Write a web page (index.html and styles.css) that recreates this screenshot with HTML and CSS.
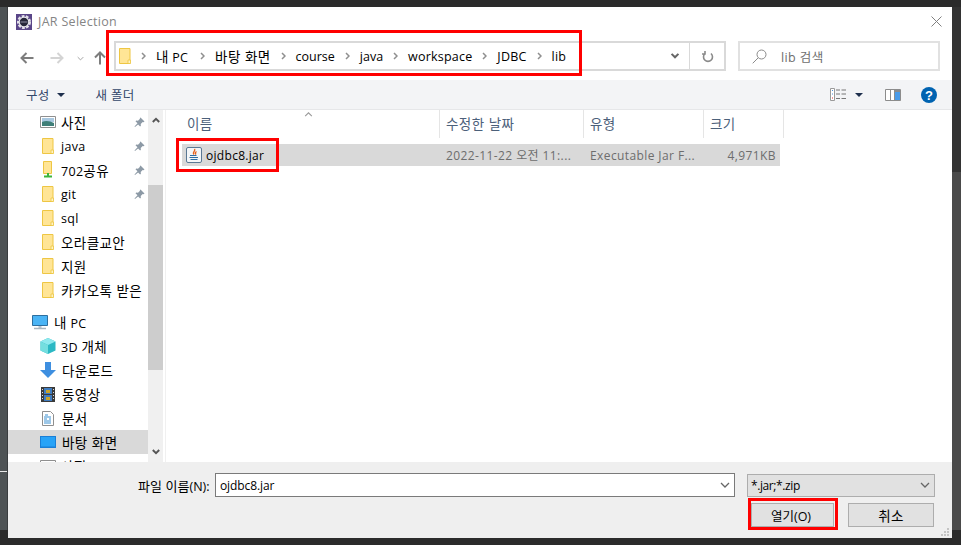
FILE: index.html
```html
<!DOCTYPE html>
<html lang="ko">
<head>
<meta charset="utf-8">
<title>JAR Selection</title>
<link rel="stylesheet" href="styles.css">
</head>
<body>
<svg class="defs" width="0" height="0" aria-hidden="true">
  <symbol id="folder" viewBox="0 0 12 16">
    <path d="M.5.5h10.500v15H.5z" fill="#ffe596" stroke="#eec643"/>
    <path d="M9 12h2.500v3.500H9z" fill="#fff3c4" stroke="#eec643" stroke-width=".8"/>
  </symbol>
  <symbol id="pin" viewBox="0 0 11 11">
    <path d="M6.500.5l4 4-1 .8-.8-.2-2 2 .2 1.700-.8.8-2-2L1 10l-.5-.5 3-3.200-2-2 .8-.8 1.700.2 2-2-.2-.800z" fill="#8d9aa6"/>
  </symbol>
  <symbol id="chev" viewBox="0 0 10 6">
    <path d="M1 1l4 4 4-4" fill="none" stroke="currentColor" stroke-width="1.300"/>
  </symbol>
  <symbol id="chev-bold" viewBox="0 0 10 7">
    <path d="M1 1l4 4 4-4" fill="none" stroke="currentColor" stroke-width="2.400"/>
  </symbol>
  <symbol id="crumb" viewBox="0 0 5 8">
    <path d="M1 1l3 3-3 3" fill="none" stroke="#8f8f8f" stroke-width="1.500"/>
  </symbol>
</svg>

<div class="screen">
  <div class="top-strip"></div>
  <div class="middle">
    <div class="left-strip"></div>
    <main class="dialog">
      <header class="titlebar">
        <svg class="app-icon" width="16" height="16" viewBox="0 0 16 16">
          <rect width="16" height="16" fill="#5a4688"/>
          <circle cx="8" cy="8" r="6" fill="none" stroke="#e4e2ea" stroke-width="2" stroke-dasharray="2.800 1.400"/>
          <circle cx="8" cy="8" r="4.800" fill="#26263a" stroke="#e8e8ee" stroke-width="1.200"/>
          <path d="M4.500 8h7" stroke="#8f8fa4"/>
        </svg>
        <span class="title-text">JAR Selection</span>
        <svg class="close" width="11" height="11" viewBox="0 0 11 11"><path d="M.5.5l10 10M10.500.5l-10 10" stroke="#808080" fill="none"/></svg>
      </header>

      <nav class="navrow">
        <svg class="nav-ico back" width="14" height="12" viewBox="0 0 14 12"><path d="M6.500 1L1.500 6l5 5M2 6h11.500" fill="none" stroke="#7d7d7d" stroke-width="2"/></svg>
        <svg class="nav-ico fwd" width="14" height="12" viewBox="0 0 14 12"><path d="M7.500 1l5 5-5 5M12 6H.5" fill="none" stroke="#d4d4d4" stroke-width="2"/></svg>
        <svg class="nav-ico down" width="7" height="5"><use href="#chev" color="#9a9a9a"/></svg>
        <svg class="nav-ico up" width="12" height="14" viewBox="0 0 12 14"><path d="M1 6.500l5-5 5 5M6 2v11.500" fill="none" stroke="#7d7d7d" stroke-width="2"/></svg>
        <div class="address">
          <svg class="crumb-folder" width="12" height="16"><use href="#folder"/></svg>
          <svg class="sep" width="5" height="8"><use href="#crumb"/></svg><span class="crumb c1"><span class="ko">내</span> PC</span>
          <svg class="sep" width="5" height="8"><use href="#crumb"/></svg><span class="crumb ko">바탕 화면</span>
          <svg class="sep" width="5" height="8"><use href="#crumb"/></svg><span class="crumb tight">course</span>
          <svg class="sep" width="5" height="8"><use href="#crumb"/></svg><span class="crumb tight">java</span>
          <svg class="sep" width="5" height="8"><use href="#crumb"/></svg><span class="crumb">workspace</span>
          <svg class="sep" width="5" height="8"><use href="#crumb"/></svg><span class="crumb">JDBC</span>
          <svg class="sep" width="5" height="8"><use href="#crumb"/></svg><span class="crumb">lib</span>
          <svg class="addr-chev" width="10" height="6"><use href="#chev-bold" color="#666"/></svg>
          <div class="refresh">
            <svg width="12" height="13" viewBox="0 0 12 13"><path d="M3 3.500a4.500 4.500 0 1 0 6 0M3 1v3H0" fill="none" stroke="#8a8a8a" stroke-width="1.600"/></svg>
          </div>
        </div>
        <div class="search">
          <svg width="15" height="15" viewBox="0 0 15 15"><circle cx="9.500" cy="5.500" r="4.500" fill="none" stroke="#8a8a8a"/><path d="M6.200 8.800L.7 14.300" stroke="#8a8a8a"/></svg>
          <span>lib 검색</span>
        </div>
      </nav>

      <div class="toolbar">
        <span class="tool organize">구성</span>
        <i class="caret"></i>
        <span class="tool newfolder">새 폴더</span>
        <div class="tool-right">
          <svg class="view" width="16" height="13" viewBox="0 0 16 13">
            <path d="M.5.500h4v12h-4z" fill="#fff" stroke="#9a9a9a"/>
            <path d="M2 2h1v1H2zM2 5.500h1v1H2z" fill="#4a90d9"/><path d="M2 9.500h1v1H2z" fill="#d33"/>
            <path d="M6 2h4M11.500 2H16M6 6h4M11.500 6H16M6 10.500h4M11.500 10.500H16" stroke="#777"/>
          </svg>
          <i class="caret view-caret"></i>
          <svg class="pane" width="16" height="12" viewBox="0 0 16 12">
            <path d="M.5.500h15v11H.5z" fill="#fff" stroke="#8c8c8c"/>
            <path d="M5.500 1v10" stroke="#8c8c8c"/>
            <path d="M9 1h6.500v10.500H9z" fill="#8c8c8c"/><path d="M10 3h5v8h-5z" fill="#4a9be8"/>
          </svg>
          <svg class="help" width="16" height="16" viewBox="0 0 16 16">
            <circle cx="8" cy="8" r="8" fill="#0063b1"/>
            <text x="8" y="12.500" text-anchor="middle" class="help-q">?</text>
          </svg>
        </div>
      </div>

      <div class="content">
        <aside class="sidebar">
          <div class="tree">
            <div class="row"><svg class="ico-wide" width="16" height="12" viewBox="0 0 16 12"><path d="M.5.5h15v11H.5z" fill="#fff" stroke="#8f8f8f"/><path d="M2 2h12v4H2z" fill="#a9c8e0"/><path d="M2 6c4-2 8-1 12 1v3H2z" fill="#3f7f78"/></svg><span class="ko">사진</span><svg class="pin" width="11" height="11"><use href="#pin"/></svg></div>
            <div class="row"><svg class="ico" width="12" height="16"><use href="#folder"/></svg><span>java</span><svg class="pin" width="11" height="11"><use href="#pin"/></svg></div>
            <div class="row"><svg class="ico" width="12" height="18" viewBox="0 0 12 18"><path d="M1.500.5h8v12h-8z" fill="#ffe596" stroke="#eec643"/><path d="M6 12v3M2 15.500h8" stroke="#3db53d" stroke-width="2"/></svg><span>702<span class="ko">공유</span></span><svg class="pin" width="11" height="11"><use href="#pin"/></svg></div>
            <div class="row"><svg class="ico" width="12" height="16"><use href="#folder"/></svg><span>git</span><svg class="pin" width="11" height="11"><use href="#pin"/></svg></div>
            <div class="row"><svg class="ico" width="12" height="16"><use href="#folder"/></svg><span>sql</span></div>
            <div class="row"><svg class="ico" width="12" height="16"><use href="#folder"/></svg><span class="ko">오라클교안</span></div>
            <div class="row"><svg class="ico" width="12" height="16"><use href="#folder"/></svg><span class="ko">지원</span></div>
            <div class="row"><svg class="ico" width="12" height="16"><use href="#folder"/></svg><span class="ko">카카오톡 받은</span></div>
            <div class="row pc"><svg class="ico-pc" width="16" height="15" viewBox="0 0 16 15"><path d="M.5.5h15v10H.5z" fill="#4ab4f5" stroke="#2d6f9f"/><path d="M6.500 11h3v2h-3z" fill="#b9c6d0"/><path d="M2 13.500h12" stroke="#a9b6c0" stroke-width="1.500"/></svg><span class="pc-label"><span class="ko">내</span> PC</span></div>
            <div class="row"><svg class="ico-wide" width="16" height="16" viewBox="0 0 16 16"><path d="M8 0l7.500 3.500v9L8 16 .5 12.500v-9z" fill="#2bb8c4"/><path d="M8 0l7.500 3.500L8 7 .5 3.500z" fill="#8fe9ee"/><path d="M8 7v9L.5 12.500v-9z" fill="#74dedf"/></svg><span>3D <span class="ko">개체</span></span></div>
            <div class="row"><svg class="ico-wide" width="16" height="16" viewBox="0 0 16 16"><path d="M5 0h6v8h5l-8 8-8-8h5z" fill="#3e8fe0"/></svg><span class="ko wide">다운로드</span></div>
            <div class="row"><svg class="ico-film" width="14" height="15" viewBox="0 0 14 15"><path d="M0 0h14v15H0z" fill="#3a3a3a"/><path d="M3 1h8v6H3z" fill="#3f7cc0"/><path d="M3 8h8v6H3z" fill="#3f7cc0"/><path d="M5 3h4v3H5zM5 10h4v3H5z" fill="#c9a227"/><path d="M1 2h1v1H1zM1 5h1v1H1zM1 8h1v1H1zM1 11h1v1H1zM12 2h1v1h-1zM12 5h1v1h-1zM12 8h1v1h-1zM12 11h1v1h-1z" fill="#ddd"/></svg><span class="ko wide">동영상</span></div>
            <div class="row"><svg class="ico-doc" width="12" height="15" viewBox="0 0 12 15"><path d="M.5.5h8l3 3v11H.5z" fill="#fff" stroke="#8f8f8f"/><path d="M3 4h3M2 6h7M2 8h3M7 8h2M2 10h7M2 12h7" stroke="#3a8fd0"/></svg><span class="ko wide">문서</span></div>
            <div class="row selected"><svg class="ico-wide" width="16" height="12" viewBox="0 0 16 12"><path d="M0 0h16v12H0z" fill="#1b7fd6"/><path d="M1 1h14v9.500H1z" fill="#28a3f7"/></svg><span class="ko wide">바탕 화면</span></div>
            <div class="row"><svg class="ico-wide" width="16" height="12" viewBox="0 0 16 12"><path d="M.5.5h15v11H.5z" fill="#fff" stroke="#8f8f8f"/></svg><span class="ko">사진</span></div>
          </div>
          <div class="scrollbar">
            <svg class="sb-up" width="8" height="6"><use href="#chev-bold" color="#555"/></svg>
            <div class="thumb"></div>
            <svg class="sb-down" width="8" height="6"><use href="#chev-bold" color="#555"/></svg>
          </div>
        </aside>
        <section class="files">
          <div class="cols">
            <div class="col c-name"><span class="ko">이름</span><svg class="sort" width="9" height="5"><use href="#chev" color="#999"/></svg></div>
            <div class="col c-date"><span class="ko">수정한 날짜</span></div>
            <div class="col c-type"><span class="ko">유형</span></div>
            <div class="col c-size"><span class="ko">크기</span></div>
          </div>
          <div class="file">
            <div class="cell c-name">
              <svg class="jar" width="16" height="16" viewBox="0 0 16 16">
                <rect x=".5" y=".5" width="15" height="15" rx="1.500" fill="#f4f6f8" stroke="#5a7894"/>
                <path d="M8.500 2C10 4 6 5 7.800 7.500M10.500 4.500C9 5.500 9.200 6.500 10 7.500" fill="none" stroke="#e8611a" stroke-width="1.400"/>
                <path d="M4 8.500h6.500M3.500 10.500h8.500M4.500 12.500h7" stroke="#2f6da3"/>
              </svg>
              <span>ojdbc8.jar</span>
            </div>
            <div class="cell c-date">2022-11-22 오전 11:...</div>
            <div class="cell c-type">Executable Jar F...</div>
            <div class="cell c-size">4,971KB</div>
          </div>
        </section>
      </div>

      <footer class="bottom">
        <div class="name-line">
          <span class="label"><span class="ko">파일 이름</span>(N):</span>
          <div class="name-input"><span>ojdbc8.jar</span><svg width="10" height="6"><use href="#chev" color="#666"/></svg></div>
          <div class="filter"><span>*.jar;*.zip</span><svg width="10" height="6"><use href="#chev" color="#666"/></svg></div>
        </div>
        <div class="buttons">
          <button class="btn open"><span class="ko">열기</span>(O)</button>
          <button class="btn cancel"><span class="ko">취소</span></button>
        </div>
        <svg class="grip" width="9" height="9" viewBox="0 0 9 9"><path d="M6 0h2v2H6zM3 3h2v2H3zM6 3h2v2H6zM0 6h2v2H0zM3 6h2v2H3zM6 6h2v2H6z" fill="#c4c4c4"/></svg>
      </footer>

      <div class="mark mark-path"></div>
      <div class="mark mark-file"></div>
      <div class="mark mark-open"></div>
    </main>
    <div class="right-strip"></div>
  </div>
  <div class="bottom-strip"></div>
</div>
</body>
</html>
```
FILE: styles.css
```css
* { box-sizing: border-box; }
html, body { margin: 0; padding: 0; }
body {
  width: 961px;
  height: 545px;
  overflow: hidden;
  font-family: "Open Sans", "Noto Sans CJK KR", sans-serif;
  font-size: 12px;
  color: #000;
  background: #2b2b2b;
}
.defs { position: absolute; }
.ko { font-family: "Noto Sans CJK KR", sans-serif; font-size: 13.500px; letter-spacing: .4px; }
.screen { display: flex; flex-direction: column; height: 545px; }
.top-strip { height: 7px; background: #2b2b2b; flex: none; }
.middle { display: flex; height: 531px; flex: none; }
.left-strip { width: 8px; height: 523px; flex: none; background: linear-gradient(#4e5355 464px, #e8e8e8 464px, #e8e8e8 465px, #4e5355 465px); border-right: 1px solid #3a3d3f; }
.right-strip { flex: 1; background: linear-gradient(#333 165px, #4a4a4a 165px, #4a4a4a 523px, #2b2b2b 523px); }
.bottom-strip { flex: 1; background: #2b2b2b; }
.dialog { position: relative; width: 944px; display: flex; flex-direction: column; background: #fff; }

.titlebar { height: 23px; display: flex; align-items: center; padding: 6px 10px 0 8px; flex: none; }
.title-text { margin-left: 6px; color: #858585; font-size: 12.500px; letter-spacing: .3px; }
.close { margin-left: auto; }

.navrow { height: 50px; display: flex; align-items: center; padding: 2px 12px 0 12px; flex: none; }
.nav-ico { flex: none; margin-top: 4px; }
.fwd { margin-left: 16px; }
.down { margin-left: 13px; }
.up { margin-left: 10px; }
.address { margin-left: 8px; width: 612px; height: 30px; border: 2px solid #d9d9d9; display: flex; align-items: center; padding-left: 3px; flex: none; }
.crumb-folder { flex: none; }
.sep { flex: none; margin-left: 10px; margin-right: 10px; }
.crumb { font-size: 12.500px; white-space: nowrap; letter-spacing: .2px; }
.crumb.ko { font-size: 13.500px; letter-spacing: .4px; }
.crumb.tight { letter-spacing: 0; }
.c1 { margin-right: 2px; }
.addr-chev { margin-left: auto; margin-right: 9px; flex: none; }
.refresh { width: 35px; height: 100%; border-left: 1px solid #d9d9d9; display: flex; align-items: center; justify-content: center; padding-left: 2px; flex: none; }
.search { margin-left: 12px; width: 202px; height: 30px; border: 2px solid #e1e1e1; display: flex; align-items: center; padding-left: 12px; gap: 14px; color: #6d6d6d; font-size: 12.500px; letter-spacing: .4px; flex: none; }

.toolbar { height: 30px; background: #f3f4f6; border-bottom: 1px solid #e6e7e9; display: flex; align-items: center; padding-left: 18px; flex: none; color: #33476a; }
.tool { font-size: 12.500px; letter-spacing: .3px; }
.caret { display: block; width: 0; height: 0; border: 4px solid transparent; border-top: 4px solid #1e2f4d; border-bottom: 0; margin-left: 7px; flex: none; }
.newfolder { margin-left: 31px; }
.tool-right { margin-left: auto; display: flex; align-items: center; padding-right: 15px; }
.view-caret { margin-left: 9px; }
.pane { margin-left: 22px; }
.help { margin-left: 20px; }
.help-q { font-family: "Liberation Sans", sans-serif; font-size: 13px; font-weight: 700; fill: #fff; }

.content { flex: 1; min-height: 0; display: flex; }
.sidebar { width: 155px; display: flex; flex: none; height: 100%; }
.tree { width: 140px; overflow: hidden; flex: none; }
.row { height: 24px; display: flex; align-items: center; padding-left: 34px; position: relative; font-size: 12.500px; letter-spacing: .3px; white-space: nowrap; }
.row > span { margin-left: 7px; }
.row > .wide { margin-left: 8px; }
.row > .pc-label { margin-left: 6px; }
.ico { flex: none; }
.ico-pc { margin-left: -10px; margin-right: 0; flex: none; }
.ico-wide { margin-left: -2px; margin-right: -2px; flex: none; }
.ico-film { margin-left: -1px; margin-right: -1px; flex: none; }
.ico-doc { flex: none; }
.pc { margin-top: 8px; }
.selected { background: #d9d9d9; }
.pin { position: absolute; right: 3px; top: 7px; }
.scrollbar { width: 15px; flex: none; background: #f0f0f0; position: relative; display: flex; flex-direction: column; align-items: center; padding-top: 7px; }
.sb-up { transform: rotate(180deg); flex: none; }
.thumb { width: 15px; height: 185px; background: #cdcdcd; margin-top: 62px; flex: none; }
.sb-down { margin-top: 79px; flex: none; }

.files { flex: 1; border-left: 1px solid #f0f0f0; margin-left: 2px; }
.cols { display: flex; height: 28px; padding-left: 16px; color: #4c607a; font-size: 12px; letter-spacing: .4px; }
.col { height: 28px; display: flex; align-items: center; padding: 0 0 2px 6px; border-right: 1px solid #e5e5e5; position: relative; flex: none; }
.cols .c-name { width: 258px; padding-left: 5px; }
.cols .c-date { width: 144px; }
.cols .c-type { width: 120px; }
.cols .c-size { width: 80px; }
.sort { position: absolute; left: 122px; top: 2px; transform: rotate(180deg); }
.file { display: flex; width: 598px; height: 22px; margin: 6px 0 0 16px; background: #d9d9d9; align-items: center; color: #6d6d6d; font-size: 12px; letter-spacing: .4px; }
.cell { flex: none; white-space: nowrap; }
.file .c-name { width: 264px; display: flex; align-items: center; padding-left: 4px; color: #000; }
.file .c-name span { margin-left: 4px; letter-spacing: .3px; }
.file .c-date { width: 144px; }
.file .c-type { width: 120px; }
.file .c-size { width: 70px; text-align: right; padding-right: 4px; }

.bottom { height: 76px; background: #efefef; flex: none; padding: 11px 17px 0 130px; position: relative; font-size: 12.500px; }
.name-line { display: flex; align-items: center; }
.label { width: 77px; flex: none; white-space: nowrap; }
.label .ko { font-size: 13px; letter-spacing: 0; }
.name-input { width: 520px; height: 24px; border: 1px solid #7a7a7a; background: #fff; display: flex; align-items: center; justify-content: space-between; padding: 0 4px; flex: none; font-size: 12px; letter-spacing: -.1px; }
.filter { width: 188px; height: 23px; margin-left: 12px; border: 1px solid #adadad; background: #e1e1e1; display: flex; align-items: center; justify-content: space-between; padding: 0 4px 0 3px; flex: none; font-size: 12px; letter-spacing: -.4px; }
.buttons { display: flex; margin: 6px 0 0 613px; }
.btn { height: 24px; border: 1px solid #adadad; background: #e1e1e1; font: inherit; color: #000; padding: 0; flex: none; }
.btn .ko { font-size: 12.500px; letter-spacing: 0; }
.open { width: 83px; padding-right: 3px; }
.cancel { width: 86px; margin-left: 14px; }
.cancel .ko { font-size: 13.500px; letter-spacing: .4px; }
.grip { position: absolute; right: 2px; bottom: 1px; }

.mark { position: absolute; border: 3px solid #f00; pointer-events: none; }
.mark-path { left: 98px; top: 23px; width: 476px; height: 46px; }
.mark-file { left: 168px; top: 131px; width: 103px; height: 34px; }
.mark-open { left: 740px; top: 491px; width: 90px; height: 32px; }
```
